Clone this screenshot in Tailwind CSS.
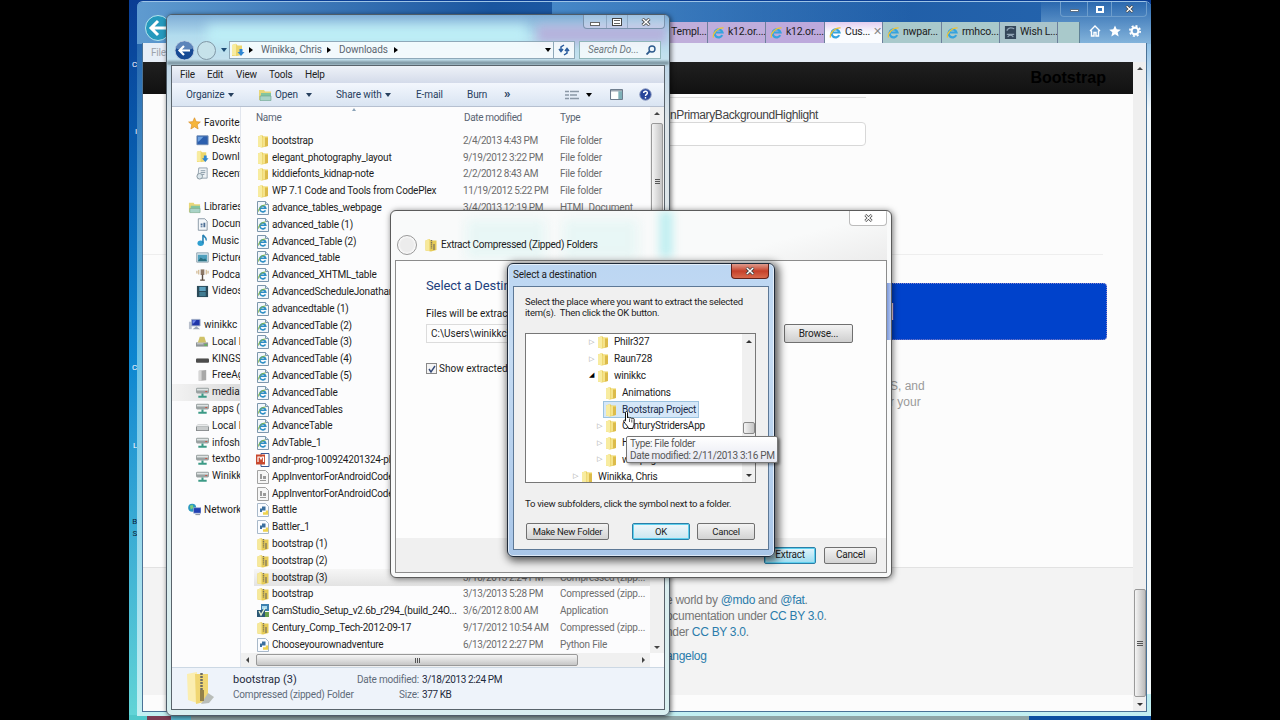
<!DOCTYPE html>
<html lang="en">
<head>
  <meta charset="UTF-8">
  <title>Desktop</title>
  <script src="https://cdn.jsdelivr.net/npm/@tailwindcss/browser@4"></script>
</head>
<body class="bg-black w-[1280px] h-[720px] overflow-hidden font-[Roboto,sans-serif] text-[10px] leading-none tracking-[-0.2px] text-[#1c1c1c] whitespace-nowrap">

  <!-- icon set -->
  <svg class="hidden">
    <symbol id="folder" viewBox="0 0 14 14">
      <path d="M2 2.500 6 1l1.500 1.500H12V12L6 13.500 2 12.500z" fill="#e9cf5c"/>
      <path d="M2 2.500 6 1v12.500l-4-1z" fill="#f8eca0"/>
      <path d="M6.500 3.500 9 2.500v9.500l-2.500 1z" fill="#f5e38a"/>
      <path d="M9 4h3v8l-3 .6z" fill="#dcbb4a"/>
    </symbol>
    <symbol id="zip" viewBox="0 0 14 14">
      <path d="M1.500 2.500 5.500 1 7 2.500h5.500V12L7 13.500l-5.500-1z" fill="#e6cb57"/>
      <path d="M1.500 2.500 5.500 1v12l-4-.5z" fill="#f7e99a"/>
      <path d="M7.500 2v9" stroke="#77725a" stroke-width="1.400" stroke-dasharray="1.300 .8"/>
      <path d="M9 6h2v6H9z" fill="#a3945a"/>
    </symbol>
    <symbol id="html" viewBox="0 0 14 14">
      <path d="M1.500.5h8l3 3v10h-11z" fill="#f2f7fb" stroke="#7d97ad"/>
      <path d="M9.500.5v3h3" fill="#cfdfec" stroke="#7d97ad"/>
      <path d="M9.500 9.300A3 3 0 1 1 9.800 7.300H4.200" fill="none" stroke="#2e8ec4" stroke-width="1.600"/>
      <path d="M2.500 10.500C2.500 7 6 4 9.500 4" fill="none" stroke="#86b640" stroke-width="1"/>
    </symbol>
    <symbol id="ie" viewBox="0 0 14 14">
      <path d="M11 9.800A4.300 4.300 0 1 1 11.300 7H4" fill="none" stroke="#35a3de" stroke-width="2.400"/>
      <path d="M1.500 12.500C.5 8 6 1.500 12.500 2" fill="none" stroke="#e9c33d" stroke-width="1.300"/>
    </symbol>
    <symbol id="ppt" viewBox="0 0 14 14">
      <path d="M5 .5h8v13H5z" fill="#fff" stroke="#3b5a96"/>
      <path d="M0 1.500h9v10H0z" fill="#c8482e"/>
      <path d="M2 9V4h2l1 2 1-2h1.500v5" fill="none" stroke="#fff" stroke-width="1.200"/>
    </symbol>
    <symbol id="doc" viewBox="0 0 14 14">
      <path d="M1.500.5h8l3 3v10h-11z" fill="#f6f6f6" stroke="#a2a2a2"/>
      <path d="M4 4h2v5H4zM7 6h3v3H7zM4 10h6v1H4z" fill="#9a9a9a"/>
    </symbol>
    <symbol id="py" viewBox="0 0 14 14">
      <path d="M1.500.5h8l3 3v10h-11z" fill="#fafcff" stroke="#a9b9ca"/>
      <path d="M5 9V6.500h3.500V4.500H6" fill="none" stroke="#3b6f9e" stroke-width="2"/>
      <path d="M7 10.500h4V7.500" fill="none" stroke="#eed24d" stroke-width="2.400"/>
    </symbol>
    <symbol id="setup" viewBox="0 0 14 14">
      <path d="M5 0h8v7H5z" fill="#3c7fae"/>
      <path d="M1 6h8v7H1z" fill="#2b5875"/>
      <path d="M6 2h5v3H6z" fill="#a8d9ee"/>
      <path d="M3 7l2 4 4-7" fill="none" stroke="#e5f1d6" stroke-width="1.400"/>
      <path d="M9 8h4v5H9z" fill="#6aa14e"/>
    </symbol>
    <symbol id="star" viewBox="0 0 14 14">
      <path d="M7 .8l1.800 4.200 4.500.4-3.400 3 1 4.500L7 10.500l-3.900 2.400 1-4.500-3.400-3 4.500-.4z" fill="#f6b63c" stroke="#d98c22" stroke-width=".7"/>
    </symbol>
    <symbol id="desktop" viewBox="0 0 14 14">
      <path d="M1 2h12v9.500H1z" fill="#2c5fae" stroke="#6f8bb3"/>
      <path d="M2 3h6L3 8H2z" fill="#6fa2e0"/>
    </symbol>
    <symbol id="downloads" viewBox="0 0 14 14">
      <path d="M1 2 5 .8 6.500 2.500H11V12l-5 1H1z" fill="#ecd66c"/>
      <path d="M1 2 5 .8v12L1 12z" fill="#f8eca0"/>
      <path d="M8.500 6h3v3H13.500L10 13 6.500 9h2z" fill="#2f86d2"/>
    </symbol>
    <symbol id="recent" viewBox="0 0 14 14">
      <path d="M3 1h9v11H2z" fill="#eef2f5" stroke="#93a2ad"/>
      <path d="M5 4h5M5 6h5M5 8h4" stroke="#8698a6"/>
      <circle cx="4" cy="10" r="3" fill="#dbe6ec" stroke="#86959f"/>
    </symbol>
    <symbol id="library" viewBox="0 0 14 14">
      <path d="M1 2h5l1 1.500h6V12H1z" fill="#e8d678"/>
      <path d="M3 5h10v3H3z" fill="#83c5a0"/>
      <path d="M2 8h11v4.500H2z" fill="#a9d3c7" stroke="#6ba28d" stroke-width=".6"/>
    </symbol>
    <symbol id="page" viewBox="0 0 14 14">
      <path d="M2.500.8h7l2.500 2.700v9.700H2.500z" fill="#f4f7fa" stroke="#8796a4"/>
      <path d="M5 6h2v2H5zM8 5h2v5H8zM5 9h2v1H5z" fill="#4a6c93"/>
    </symbol>
    <symbol id="music" viewBox="0 0 14 14">
      <ellipse cx="5" cy="10" rx="3.400" ry="3" fill="#2f9fd0"/>
      <path d="M7.500 10V1c1 2 4.500 2.500 3.500 6" fill="none" stroke="#2681b4" stroke-width="1.700"/>
    </symbol>
    <symbol id="picture" viewBox="0 0 14 14">
      <path d="M.8 2h12.400v10H.8z" fill="#dfeaf0" stroke="#8ba0ad"/>
      <path d="M2 4h10v7H2z" fill="#4fa0bd"/>
      <path d="M2 11l3-4 3 2 2-1 2 3z" fill="#2b6f80"/>
    </symbol>
    <symbol id="podcast" viewBox="0 0 14 14">
      <path d="M5 1.500h4v6H5z" fill="#8c7765"/>
      <path d="M7 7v6M4.500 13h5" stroke="#5c4d42" stroke-width="1.500"/>
      <path d="M3 2v5M11 2v5M1 3v3M13 3v3" stroke="#c2a16e"/>
    </symbol>
    <symbol id="video" viewBox="0 0 14 14">
      <path d="M1 1h12v12H1z" fill="#2b4a59"/>
      <path d="M3.500 2h7v4.500h-7z" fill="#5ea2c0"/>
      <path d="M3.500 7.500h7V12h-7z" fill="#417c92"/>
    </symbol>
    <symbol id="book" viewBox="0 0 14 14">
      <path d="M1 0h12v14H1z" fill="#33475a"/>
      <path d="M3 5c2-4 6-3 8-2M3 9h8M4 12c1-3 5-3 6 0" fill="none" stroke="#8ea3b4" stroke-width="1.300"/>
    </symbol>
    <symbol id="pc" viewBox="0 0 14 14">
      <path d="M1 4h3v8H1z" fill="#b9c0cc"/>
      <path d="M4 1.500h9v7H4z" fill="#1f35a8" stroke="#a3b0c6"/>
      <path d="M9 9l-4 3h8z" fill="#9aa5b5"/>
      <path d="M5 2.500h4L6 6H5z" fill="#6d86e8"/>
    </symbol>
    <symbol id="localdisk" viewBox="0 0 14 14">
      <path d="M0 8h13v4.500H0z" fill="#8e9496"/>
      <path d="M2 8 4 2h5l2 6z" fill="#cfc168"/>
      <path d="M1 9h7v1H1z" fill="#d8dcdd"/>
      <path d="M9 10h3v1.500H9z" fill="#5abb49"/>
    </symbol>
    <symbol id="usb" viewBox="0 0 14 14">
      <rect x="0" y="7" width="14" height="4.500" rx="1" fill="#4c4c4c"/>
      <path d="M1 7h12" stroke="#9b9b9b"/>
    </symbol>
    <symbol id="extdrive" viewBox="0 0 14 14">
      <path d="M3 2l8-1v11l-8 1z" fill="#a8a8a8"/>
      <path d="M3 2l3-.4v11L3 13z" fill="#d6d6d6"/>
    </symbol>
    <symbol id="netdrive" viewBox="0 0 14 14">
      <rect x="0" y="2" width="14" height="6" rx="1.500" fill="#9aa2a2"/>
      <path d="M1 3h12v1.800H1z" fill="#dfe4e4"/>
      <path d="M7 8v3M2.500 11.500h9" stroke="#3c9a86" stroke-width="2.200"/>
      <path d="M10 5.500h2v1h-2z" fill="#d04c3a"/>
    </symbol>
    <symbol id="drive" viewBox="0 0 14 14">
      <path d="M0 8l2-2h10l2 2v5H0z" fill="#85898b"/>
      <path d="M1 8.500h12V12H1z" fill="#c9cccd"/>
      <path d="M0 8l2-2h10l2 2z" fill="#e9ebec"/>
    </symbol>
    <symbol id="network" viewBox="0 0 14 14">
      <circle cx="4.500" cy="5" r="4.300" fill="#2b9ac0"/>
      <path d="M2 3l3-1 1 3-3 2z" fill="#7fce7a"/>
      <path d="M6 5h8v6H6z" fill="#2140b4" stroke="#aebad0" stroke-width=".7"/>
      <path d="M8 12.500h5" stroke="#7c8797"/>
    </symbol>
    <symbol id="x" viewBox="0 0 10 8">
      <path d="M1.500.8l7 6.400M8.500.8l-7 6.400" stroke="#444" stroke-width="3"/>
      <path d="M1.800 1l6.400 6M8.200 1 1.800 7" stroke="#fff" stroke-width="1.500"/>
    </symbol>
  </svg>

  <!-- desktop -->
  <div class="absolute left-[129px] top-0 w-[1022px] h-[720px] overflow-hidden bg-linear-to-b from-[#0a3d94] via-[#0d86d0] to-[#62d5d6]">
    <div class="absolute left-0 top-0 w-2 h-[720px] flex flex-col items-end text-[8px] text-[#0b2338]">
      <span class="mt-[61px] text-white">C</span>
      <span class="mt-[59px] text-white">I</span>
      <span class="mt-[228px] text-white">C</span>
      <span class="mt-[70px] text-white">L</span>
      <span class="mt-[68px]">B</span>
      <span class="mt-1">S</span>
    </div>
    <div class="absolute left-0 bottom-0 w-full h-[5px] flex bg-[#86a7a8]">
      <div class="w-[18px] bg-[#50c8ca]"></div>
      <div class="w-[24px] bg-[#7b3b52]"></div>
      <div class="w-[20px] bg-[#57b7d0]"></div>
      <div class="w-[838px] bg-[#8fa5a6]"></div>
      <div class="flex-1 bg-[#0b4fa0]"></div>
    </div>
  </div>

  <!-- browser window -->
  <div class="absolute left-[137px] top-px w-[1014px] h-[715px] flex flex-col pl-[5px] pr-1 pb-1 rounded-t-md border-t border-[#9cc3e6] bg-linear-to-b from-[#1d5ca8] via-[#6fc3e6] via-50% to-[#c3f0f2] overflow-hidden">
    <div class="absolute right-0 top-[42px] w-[4px] h-[650px] bg-linear-to-b from-[#8fc0e6] via-[#f2f8fb] via-10% to-[#f6fafb]"></div>
    <div class="absolute left-0 top-0 w-full h-[42px] bg-linear-to-r from-[#5f9bd0] via-[#1a559f] via-35% to-[#2565ae]"></div>
    <div class="absolute right-0 top-0 w-[110px] h-[42px] bg-linear-to-b from-[#2f6cb0]/60 to-[#85b5dc]"></div>
    <div class="absolute left-[415px] top-0 w-[360px] h-5 bg-linear-to-r from-[#4688c8] to-transparent"></div>

    <div class="relative h-[20px] shrink-0 flex justify-end">
      <div class="flex h-[15px] w-[87px] border-x border-b border-[#6d9dcc] rounded-b">
        <span class="w-[26px] flex items-end justify-center pb-1"><span class="w-[9px] h-[3px] bg-white border border-[#5b6f85]"></span></span>
        <span class="w-[25px] border-x border-[#6d9dcc] flex items-center justify-center"><span class="w-[8px] h-[7px] border-2 border-white"></span></span>
        <span class="flex-1 flex items-center justify-center"><svg class="w-[9px] h-[8px]"><use href="#x"/></svg></span>
      </div>
    </div>
    <div class="relative h-[21px] shrink-0 flex">
      <div class="w-[524px] flex items-center">
        <svg class="w-[28px] h-[28px] -mt-3 ml-px" viewBox="0 0 28 28">
          <circle cx="15" cy="15" r="12.500" fill="#2599bd" stroke="#b6e4ee"/>
          <path d="M23 15H9M15 8l-7 7 7 7" fill="none" stroke="#fff" stroke-width="3"/>
        </svg>
      </div>
      <div id="tabs" class="flex text-[10.500px] tracking-[-0.2px]"></div>
      <div class="w-[22px] bg-[#a9c9cb] border-r border-[#5f8196]"></div>
      <div class="flex-1 flex items-center justify-between pl-[9px] pr-[6px] pb-[3px]">
        <svg class="w-3 h-3" viewBox="0 0 12 12"><path d="M1 6l5-5 5 5M2.500 5.500V11H5V7.500h2V11h2.500V5.500" fill="none" stroke="#fff" stroke-width="1.400"/></svg>
        <svg class="w-3 h-3" viewBox="0 0 14 14"><path d="M7 .5l2 4.500 4.800.4-3.700 3.100L11.300 13.500 7 10.800l-4.300 2.700 1.200-5L.2 5.400 5 5z" fill="#fff"/></svg>
        <svg class="w-3 h-3" viewBox="0 0 14 14"><circle cx="7" cy="7" r="4" fill="none" stroke="#fff" stroke-width="2.500"/><circle cx="7" cy="7" r="6" fill="none" stroke="#fff" stroke-width="2" stroke-dasharray="2.350 2.350"/></svg>
      </div>
    </div>

    <div class="relative flex-1 min-h-0 flex flex-col border-x border-b border-[#4a7296] bg-[#fcfcfc]">
      <div class="h-[19px] shrink-0 bg-[#e7eef7] pl-2 pt-[5px] text-[#9da3ab]">File</div>
      <div class="flex-1 min-h-0 flex">
        <div class="flex-1 flex flex-col font-['Liberation_Sans',sans-serif] text-[12px]">
          <div class="h-[32px] shrink-0 bg-linear-to-b from-[#202020] to-[#111] flex justify-end items-center pr-[27px] text-[16px] tracking-normal font-bold text-black">Bootstrap</div>
          <div class="h-[4px] ml-[520px] w-[203px] border-b border-[#dcdcdc]"></div>
          <div class="pl-[527px] pt-[11px] tracking-[-0.4px] text-[#444]">nPrimaryBackgroundHighlight</div>
          <div class="mt-px ml-[500px] w-[223px] h-[24px] rounded border border-[#d8d8d8] bg-white"></div>
          <div class="mt-[108px] mr-[30px] border-t border-[#eee]"></div>
          <div class="mt-[28px] ml-[500px] mr-[26px] h-[57px] rounded bg-[#0042cb] border border-dotted border-[#8a83c8] flex items-center pl-[237px] text-[24px] text-white">d</div>
          <div class="mt-[38px] pl-[740px] tracking-normal leading-4 text-[#9a9a9a]">
            <p class="pl-[7px]">S, and</p>
            <p class="pl-[7px]">r your</p>
          </div>
          <div class="mt-[157px] h-[128px] border-t border-[#e2e2e2] bg-[#f3f3f3] pt-[24px] pl-[523px] tracking-[-0.3px] leading-4 text-[#777]">
            <p>e world by <span class="text-[#2a7cab]">@mdo</span> and <span class="text-[#2a7cab]">@fat</span>.</p>
            <p>ocumentation under <span class="text-[#2a7cab]">CC BY 3.0</span>.</p>
            <p>nder <span class="text-[#2a7cab]">CC BY 3.0</span>.</p>
            <p class="mt-2 text-[#2a7cab]">angelog</p>
          </div>
        </div>
        <div class="w-[13px] flex flex-col items-center bg-[#efefef]">
          <span class="h-[14px] pt-[5px]"><span class="block border-x-3 border-x-transparent border-b-3 border-b-[#444]"></span></span>
          <span class="mt-[513px] w-[12px] h-[108px] rounded-xs border border-[#999] bg-linear-to-r from-[#f4f4f4] to-[#bcbcbc] flex flex-col items-center justify-center gap-px">
            <span class="w-[6px] h-px bg-[#555]"></span><span class="w-[6px] h-px bg-[#555]"></span><span class="w-[6px] h-px bg-[#555]"></span>
          </span>
          <span class="pt-[6px]"><span class="block border-x-3 border-x-transparent border-t-3 border-t-[#333]"></span></span>
        </div>
      </div>
    </div>
  </div>

  <!-- file explorer window -->
  <div class="absolute left-[166px] top-[14px] w-[504px] h-[702px] rounded-md border border-[#4e5c68] bg-linear-to-b from-[#9fc8e6] via-[#dde4e8] via-15% to-[#d9eff0] shadow-[1px_1px_5px_rgba(0,0,0,.6)] flex flex-col px-1 pb-[5px] overflow-hidden">
    <div class="absolute left-0 top-0 w-full h-[51px] bg-linear-to-b from-[#7fadd6] via-[#b2dcee] via-40% to-[#c9e2ee]"></div>
    <div class="absolute left-[40px] top-[10px] w-[320px] h-[20px] bg-[#bdeef6] blur-[6px]"></div>
    <div class="absolute left-[370px] top-[10px] w-[130px] h-[18px] bg-[#b5b2dc] blur-[5px]"></div>
    <div class="absolute left-0 top-[46px] w-full h-[4px] bg-[#7f99a5] blur-[1px]"></div>

    <div class="relative h-[25px] shrink-0 flex justify-end items-start">
      <div class="flex w-[82px] h-[14px] border-x border-b border-[#7a92ad] rounded-b bg-white/25">
        <span class="w-[22px] flex items-end justify-center pb-[2px]"><span class="w-[10px] h-[4px] bg-white border border-[#666]"></span></span>
        <span class="w-[22px] border-x border-[#7a92ad]/60 flex items-center justify-center"><span class="w-[10px] h-[8px] bg-white border border-[#444] p-px"><span class="block w-full h-[4px] border-y border-[#666]"></span></span></span>
        <span class="flex-1 flex items-center justify-center"><svg class="w-[10px] h-[8px]"><use href="#x"/></svg></span>
      </div>
    </div>
    <div class="relative h-[25px] shrink-0 flex items-center pl-[3px] pb-[5px]">
      <svg class="w-[44px] h-[21px] shrink-0" viewBox="0 0 44 21">
        <circle cx="10.500" cy="10.500" r="9.500" fill="#174a94" stroke="#b9cbe0"/>
        <path d="M1.500 8a9.500 9.500 0 0 1 18 0c-5 3-13 3-18 0z" fill="#7a9dcb" opacity=".7"/>
        <path d="M16 10.500H6M10 6l-4.500 4.500L10 15" fill="none" stroke="#fff" stroke-width="2.200"/>
        <circle cx="32.500" cy="10.500" r="9" fill="#c6e2ea" stroke="#8097a5"/>
      </svg>
      <span class="w-[12px] flex justify-center"><span class="border-x-3 border-x-transparent border-t-4 border-t-[#1d4c74]"></span></span>
      <div class="ml-[-1px] w-[325px] h-[18px] border border-[#8fa9b9] bg-white/80 flex items-center text-[#5c6670] tracking-[-0.1px]">
        <svg class="w-[14px] h-[14px] ml-px"><use href="#downloads"/></svg>
        <span class="ml-[4px] border-y-3 border-y-transparent border-l-4 border-l-black"></span>
        <span class="ml-[8px] w-[60px]">Winikka, Chris</span>
        <span class="ml-[6px] border-y-3 border-y-transparent border-l-4 border-l-black"></span>
        <span class="ml-[8px] w-[48px]">Downloads</span>
        <span class="ml-[7px] border-y-3 border-y-transparent border-l-4 border-l-black"></span>
        <span class="ml-auto mr-[2px] border-x-3 border-x-transparent border-t-4 border-t-black"></span>
      </div>
      <div class="w-[21px] h-[18px] border border-l-0 border-[#8fa9b9] bg-white/80 flex items-center justify-center">
        <svg class="w-[12px] h-[12px]" viewBox="0 0 12 12"><path d="M6 1 3 3v4M1 5l2 2.500L5 5M6 11l3-2V5M7 7l2-2.500L11 7" fill="none" stroke="#2b5c9e" stroke-width="1.500"/></svg>
      </div>
      <div class="ml-[4px] w-[82px] h-[18px] border border-[#8fb5b9] bg-white/75 flex items-center justify-between pl-[8px] pr-[4px] italic text-[#6d7880] tracking-[-0.1px]">Search Do...
        <svg class="w-[10px] h-[10px]" viewBox="0 0 10 10"><circle cx="6" cy="4" r="3" fill="none" stroke="#2e5b8d" stroke-width="1.400"/><path d="M4 6 .5 9.500" stroke="#2e5b8d" stroke-width="1.800"/></svg>
      </div>
    </div>

    <div class="relative flex-1 min-h-0 flex flex-col border border-[#59636b] bg-[#fcfcfd]">
      <div class="h-[17px] shrink-0 bg-linear-to-b from-[#eef2f8] to-[#d4dbea] flex items-center pl-[8px] text-[#222]">
        <span class="w-[27px]">File</span><span class="w-[29px]">Edit</span><span class="w-[33px]">View</span><span class="w-[36px]">Tools</span><span>Help</span>
      </div>
      <div class="h-[24px] shrink-0 border-b border-[#b6c0d0] bg-linear-to-b from-[#f3f7fd] to-[#d9e4f2] flex items-center pl-[14px] text-[#27405e] tracking-[-0.1px]">
        <span class="w-[42px]">Organize</span>
        <span class="border-x-3 border-x-transparent border-t-4 border-t-[#27405e]"></span>
        <svg class="ml-[24px] w-[14px] h-[14px]"><use href="#library"/></svg>
        <span class="ml-[3px] w-[31px]">Open</span>
        <span class="border-x-3 border-x-transparent border-t-4 border-t-[#27405e]"></span>
        <span class="ml-[24px] w-[49px]">Share with</span>
        <span class="border-x-3 border-x-transparent border-t-4 border-t-[#27405e]"></span>
        <span class="ml-[25px] w-[51px]">E-mail</span>
        <span class="w-[37px]">Burn</span>
        <span class="w-[61px] text-[13px] font-bold leading-none -mt-[2px]">»</span>
        <svg class="w-[14px] h-[10px]" viewBox="0 0 14 10"><path d="M0 1.500h4M5 1.500h9M0 5h4M5 5h7M0 8.500h4M5 8.500h9" stroke="#8b98a6" stroke-width="1.300"/></svg>
        <span class="ml-[7px] border-x-3 border-x-transparent border-t-4 border-t-black"></span>
        <svg class="ml-[18px] w-[13px] h-[11px]" viewBox="0 0 14 12"><path d="M.5.5h13v11H.5z" fill="#fff" stroke="#5c6c7e"/><path d="M.5 2h13" stroke="#5c6c7e"/><path d="M9 2.500h4v8.500H9z" fill="#7fb0b8"/></svg>
        <svg class="ml-[16px] w-[13px] h-[13px]" viewBox="0 0 14 14"><circle cx="7" cy="7" r="6.200" fill="#27459a" stroke="#8d9bbf"/><path d="M5 5.500C5 2.500 9.300 3 9 5.500 8.800 7 7 6.800 7 8.500M7 9.800v1.400" fill="none" stroke="#fff" stroke-width="1.500"/></svg>
      </div>

      <div class="flex-1 min-h-0 flex">
        <div id="nav" class="w-[69px] shrink-0 pt-[8px] border-r border-[#e2e6ee] overflow-hidden"></div>
        <div class="flex-1 min-w-0 flex flex-col">
          <div class="flex-1 min-h-0 flex">
            <div class="flex-1 min-w-0">
              <div class="relative h-[25.500px] flex items-center pb-[4px] pl-[15px] text-[#5a6472]">
                <span class="w-[208px] tracking-[-0.3px]">Name</span><span class="w-[96px] tracking-[-0.35px]">Date modified</span><span>Type</span>
                <span class="absolute left-[111px] top-px border-x-2 border-x-transparent border-b-3 border-b-[#8ba3b8]"></span>
              </div>
              <div id="files" class="pl-[13px]"></div>
            </div>
            <div class="w-[14px] shrink-0 bg-[#f0f0f0] flex flex-col items-center justify-between pt-[5px] pb-[4px]">
              <span class="border-x-3 border-x-transparent border-b-3 border-b-[#444]"></span>
              <span class="w-[12px] h-[118px] mb-[398px] rounded-xs border border-[#999] bg-linear-to-r from-[#f4f4f4] to-[#c4c4c4] flex flex-col items-center justify-center gap-px">
                <span class="w-[5px] h-px bg-[#555]"></span><span class="w-[5px] h-px bg-[#555]"></span><span class="w-[5px] h-px bg-[#555]"></span>
              </span>
              <span class="border-x-3 border-x-transparent border-t-3 border-t-[#444]"></span>
            </div>
          </div>
          <div class="h-[14px] shrink-0 mr-[14px] bg-[#f0f0f0] flex items-center pl-[5px] pr-[5px]">
            <span class="border-y-3 border-y-transparent border-r-3 border-r-[#444]"></span>
            <span class="ml-[7px] w-[322px] h-[12px] rounded-xs border border-[#999] bg-linear-to-b from-[#f6f6f6] to-[#c6c6c6] flex items-center justify-center gap-px">
              <span class="w-px h-[5px] bg-[#555]"></span><span class="w-px h-[5px] bg-[#555]"></span><span class="w-px h-[5px] bg-[#555]"></span>
            </span>
            <span class="ml-auto border-y-3 border-y-transparent border-l-3 border-l-[#444]"></span>
          </div>
        </div>
      </div>

      <div class="h-[42px] shrink-0 border-t border-[#ccd8e4] bg-[#eef3fa] flex pl-[13px] text-[#5f6b79]">
        <svg class="w-[32px] h-[34px] mt-[3px]" viewBox="0 0 32 34">
          <path d="M2 3 12 1v31L3 29z" fill="#fbeeb0"/>
          <path d="M10 3h13v27l-12 3z" fill="#f0d672"/>
          <path d="M23 22l6 4-5 6-8 1z" fill="#b9bdb9"/>
          <path d="M16.500 2v18" stroke="#6b6b66" stroke-width="2.500" stroke-dasharray="2 1"/>
          <path d="M15 19h4v11h-4z" fill="#94814a"/>
        </svg>
        <div class="ml-[16px] w-[123px] pt-[5px] leading-[14px]">
          <p class="text-[#1e2a3c] tracking-normal text-[11px]">bootstrap (3)</p>
          <p class="pt-px">Compressed (zipped) Folder</p>
        </div>
        <div class="w-[63px] pt-[5px] leading-[14px] flex flex-col items-end">
          <p>Date modified:</p>
          <p class="pt-px">Size:</p>
        </div>
        <div class="ml-[3px] pt-[5px] leading-[14px] text-[#1e2a3c] tracking-[-0.4px]">
          <p>3/18/2013 2:24 PM</p>
          <p class="pt-px">377 KB</p>
        </div>
      </div>
    </div>
  </div>

  <!-- extract wizard -->
  <div class="absolute left-[390px] top-[210px] w-[502px] h-[368px] rounded-md border border-[#5b5b5b] bg-[#f9fafa] shadow-[1px_1px_6px_rgba(0,0,0,.55)] flex flex-col px-1 pb-1 overflow-hidden">
    <div class="absolute left-[75px] top-[8px] w-[80px] h-[40px] bg-[#d8f3f1]/50 blur-[6px]"></div>
    <div class="absolute left-[172px] top-[8px] w-[75px] h-[40px] bg-[#d8f3f1]/50 blur-[6px]"></div>
    <div class="absolute left-[268px] top-0 w-[14px] h-[46px] bg-[#c2eff1] blur-[4px]"></div>
    <div class="absolute right-[4px] top-0 w-[180px] h-[49px] bg-linear-to-br from-transparent from-50% to-[#ececec]"></div>
    <div class="absolute right-0 top-[72px] w-[5px] h-[57px] bg-linear-to-r from-[#6f8fd8] to-[#b4c6ee]"></div>
    <div class="relative h-[20px] flex justify-end">
      <span class="w-[38px] h-[15px] border-x border-b border-[#bcbcbc] rounded-b flex items-center justify-center bg-white"><svg class="w-[9px] h-[8px]"><use href="#x"/></svg></span>
    </div>
    <div class="relative h-[29px] flex items-center pl-[2px] pb-[1px]">
      <span class="w-[20px] h-[20px] rounded-full border border-[#9a9a9a] bg-[#ececec] shadow-[inset_0_0_2px_1px_#fff]"></span>
      <svg class="ml-[7px] w-[14px] h-[14px]"><use href="#zip"/></svg>
      <span class="ml-[3px] tracking-[-0.25px]">Extract Compressed (Zipped) Folders</span>
    </div>
    <div class="relative flex-1 border border-[#8c8c8c] bg-[#fdfdfd] flex flex-col">
      <div class="flex-1 pl-[30px] pt-[18px]">
        <h1 class="text-[13px] leading-[14px] tracking-[-0.1px] text-[#1d3f7c]">Select a Destination</h1>
        <p class="mt-[16px] tracking-[0px]">Files will be extracted to this folder:</p>
        <div class="mt-[5px] flex">
          <div class="w-[346px] h-[19px] border border-[#dcdcdc] flex items-center pl-[4px] tracking-normal">C:\Users\winikkc\</div>
          <button class="ml-[12px] w-[69px] h-[19px] border border-[#707070] rounded-xs bg-linear-to-b from-[#f3f3f3] to-[#cfcfcf]">Browse...</button>
        </div>
        <div class="mt-[20px] flex items-center tracking-normal">
          <span class="w-[11px] h-[11px] border border-[#888] bg-[#f4f4f4] flex items-center justify-center"><svg class="w-[8px] h-[8px]" viewBox="0 0 8 8"><path d="M1 4l2 3 4-6" fill="none" stroke="#354a78" stroke-width="1.400"/></svg></span>
          <span class="ml-[2px]">Show extracted files when complete</span>
        </div>
      </div>
      <div class="h-[34px] bg-[#f0f0f0] flex justify-end items-center gap-[8px] pr-[9px]">
        <button class="w-[52px] h-[17px] border border-[#2b7fa8] rounded-xs bg-linear-to-b from-[#e3f5fc] to-[#9bdcf1] shadow-[inset_0_0_0_1px_#5fd0ee]">Extract</button>
        <button class="w-[53px] h-[17px] border border-[#707070] rounded-xs bg-linear-to-b from-[#f3f3f3] to-[#d3d3d3]">Cancel</button>
      </div>
    </div>
  </div>

  <!-- folder picker -->
  <div class="absolute left-[507px] top-[263px] w-[268px] h-[294px] rounded-md border border-[#202b3a] bg-linear-to-b from-[#bcd6f2] via-[#c6dcf3] via-30% to-[#a9c6e8] shadow-[2px_2px_9px_2px_rgba(0,0,0,.65),inset_0_0_0_1px_rgba(255,255,255,.6)] flex flex-col px-[5px] pb-[6px]">
    <div class="h-[22px] flex justify-between">
      <span class="pt-[6px]">Select a destination</span>
      <span class="w-[38px] h-[15px] border border-t-0 border-[#61221a] rounded-b bg-linear-to-b from-[#dd9a8c] via-[#c5402a] via-50% to-[#d8694c] flex items-center justify-center"><svg class="w-[10px] h-[8px]"><use href="#x"/></svg></span>
    </div>
    <div class="flex-1 border border-[#5d7896] bg-[#f0f0f0] px-[12px] pt-[10px]">
      <p class="-ml-px text-[9.500px] leading-[10.500px] tracking-[-0.250px] whitespace-pre">Select the place where you want to extract the selected
item(s).  Then click the OK button.</p>
      <div class="mt-[15px] -ml-px h-[150px] border border-[#777] bg-white flex overflow-hidden">
        <div id="tree" class="flex-1"></div>
        <div class="w-[13px] bg-[#f0f0f0] flex flex-col items-center justify-between pt-[6px] pb-[5px]">
          <span class="border-x-3 border-x-transparent border-b-3 border-b-[#333]"></span>
          <span class="mt-[78px] mb-[40px] w-[12px] h-[12px] rounded-xs border border-[#888] bg-linear-to-r from-[#f4f4f4] to-[#c4c4c4]"></span>
          <span class="border-x-3 border-x-transparent border-t-3 border-t-[#333]"></span>
        </div>
      </div>
      <p class="mt-[16px] -ml-px text-[9.500px] leading-[10px] tracking-[-0.250px]">To view subfolders, click the symbol next to a folder.</p>
      <div class="mt-[14px] flex text-[9.500px] tracking-[-0.250px]">
        <button class="w-[83px] h-[17px] border border-[#707070] rounded-xs bg-linear-to-b from-[#f3f3f3] to-[#d3d3d3]">Make New Folder</button>
        <button class="ml-[23px] w-[58px] h-[17px] border border-[#2b7fa8] rounded-xs bg-linear-to-b from-[#f0f7fa] to-[#c9e6f1] shadow-[inset_0_0_0_1px_#5fd0ee]">OK</button>
        <button class="ml-[7px] w-[58px] h-[17px] border border-[#707070] rounded-xs bg-linear-to-b from-[#f3f3f3] to-[#d3d3d3]">Cancel</button>
      </div>
    </div>
  </div>

  <!-- tooltip and pointer -->
  <div class="absolute left-[626px] top-[436px] w-[152px] h-[27px] border border-[#767676] rounded-xs bg-linear-to-b from-white to-[#e5e7f1] shadow-[2px_2px_3px_rgba(0,0,0,.4)] pl-[3px] pt-px leading-[12px] text-[#575757] tracking-[-0.3px]">
    <p>Type: File folder</p>
    <p>Date modified: 2/11/2013 3:16 PM</p>
  </div>
  <svg class="absolute left-[623px] top-[411px] w-[14px] h-[19px]" viewBox="0 0 14 19">
    <path d="M2.500 1.500c0-1.300 2-1.300 2 0V7c.3-1 2-.9 2.200.2.400-.8 2-.6 2.200.5.500-.8 2.300-.5 2.300.8l-.2 5c-.2 1.500-1 2-1 4H5.500C5 15 2.500 13.500.8 10.500c-.6-1.300.8-1.800 1.700-.6z" fill="#fff" stroke="#111"/>
    <path d="M6.500 8v3M8.800 8.500v3" stroke="#111" stroke-width=".7"/>
  </svg>

  <script>
    const tabs = [
      ["", "Templ...", "w-[42px] pl-[5px] bg-[#c0aedb]"],
      ["ie", "k12.or....", "w-[58px] bg-[#bfaddc]"],
      ["ie", "k12.or....", "w-[59px] bg-[#bda9dc]"],
      ["ie", "Cus...", "w-[58px] bg-linear-to-b from-[#e3cdf0] to-[#fafcff] to-50%"],
      ["ie", "nwpar...", "w-[59px] bg-[#a9c9cb]"],
      ["ie", "rmhco...", "w-[58px] bg-[#a9c9cb]"],
      ["book", "Wish L...", "w-[58px] bg-[#a9c4cb]"]
    ];
    document.getElementById("tabs").innerHTML = tabs.map(([icon, text, cls]) => `
      <div class="${cls} flex items-center border-r border-[#6d7f9c] overflow-hidden">
        ${icon ? `<svg class="w-[13px] h-[13px] shrink-0 ml-[4px] mr-[3px]"><use href="#${icon}"/></svg>` : ""}
        <span>${text}</span>
        ${text === "Cus..." ? `<span class="ml-[3px] text-[#888]">✕</span>` : ""}
      </div>`).join("");

    const nav = [
      ["star", "Favorites"], ["desktop", "Desktop", 1], ["downloads", "Downloads", 1], ["recent", "Recent Places", 1], null,
      ["library", "Libraries"], ["page", "Documents", 1], ["music", "Music", 1], ["picture", "Pictures", 1],
      ["podcast", "Podcasts", 1], ["video", "Videos", 1], null,
      ["pc", "winikkc"], ["localdisk", "Local Disk", 1], ["usb", "KINGSTON", 1], ["extdrive", "FreeAgent", 1],
      ["netdrive", "media (", 1], ["netdrive", "apps (\\\\", 1], ["drive", "Local Disk", 1], ["netdrive", "infoshare", 1],
      ["netdrive", "textbooks", 1], ["netdrive", "Winikka", 1], null,
      ["network", "Network"]
    ];
    document.getElementById("nav").innerHTML = nav.map(item => {
      if (!item) return `<div class="h-[16.8px]"></div>`;
      const [icon, text, child] = item;
      return `
      <div class="h-[16.8px] flex items-center overflow-hidden tracking-[0px] ${child ? "pl-[24px]" : "pl-[16px]"} ${text === "media (" ? "bg-linear-to-r from-[#f3f3f3] to-[#dcdcdc]" : ""}">
        <svg class="w-[13px] h-[13px] shrink-0 mr-[3px]"><use href="#${icon}"/></svg>
        <span>${text}</span>
      </div>`;
    }).join("");

    const html = "HTML Document", zipped = "Compressed (zipp...";
    const files = [
      ["folder", "bootstrap", "2/4/2013 4:43 PM", "File folder"],
      ["folder", "elegant_photography_layout", "9/19/2012 3:22 PM", "File folder"],
      ["folder", "kiddiefonts_kidnap-note", "2/2/2012 8:43 AM", "File folder"],
      ["folder", "WP 7.1 Code and Tools from CodePlex", "11/19/2012 5:22 PM", "File folder"],
      ["html", "advance_tables_webpage", "3/4/2013 12:19 PM", html],
      ["html", "advanced_table (1)", "", ""],
      ["html", "Advanced_Table (2)", "", ""],
      ["html", "Advanced_table", "", ""],
      ["html", "Advanced_XHTML_table", "", ""],
      ["html", "AdvancedScheduleJonathan", "", ""],
      ["html", "advancedtable (1)", "", ""],
      ["html", "AdvancedTable (2)", "", ""],
      ["html", "AdvancedTable (3)", "", ""],
      ["html", "AdvancedTable (4)", "", ""],
      ["html", "AdvancedTable (5)", "", ""],
      ["html", "AdvancedTable", "", ""],
      ["html", "AdvancedTables", "", ""],
      ["html", "AdvanceTable", "", ""],
      ["html", "AdvTable_1", "", ""],
      ["ppt", "andr-prog-100924201324-phpapp", "", ""],
      ["doc", "AppInventorForAndroidCode", "", ""],
      ["doc", "AppInventorForAndroidCode", "", ""],
      ["py", "Battle", "", ""],
      ["py", "Battler_1", "", ""],
      ["zip", "bootstrap (1)", "", ""],
      ["zip", "bootstrap (2)", "", ""],
      ["zip", "bootstrap (3)", "3/18/2013 2:24 PM", zipped],
      ["zip", "bootstrap", "3/13/2013 5:28 PM", zipped],
      ["setup", "CamStudio_Setup_v2.6b_r294_(build_24O...", "3/6/2012 8:00 AM", "Application"],
      ["zip", "Century_Comp_Tech-2012-09-17", "9/17/2012 10:54 AM", zipped],
      ["py", "Chooseyourownadventure", "6/13/2012 2:27 PM", "Python File"]
    ];
    document.getElementById("files").innerHTML = files.map(([icon, name, date, type]) => `
      <div class="h-[16.8px] flex items-center ${name === "bootstrap (3)" ? "bg-linear-to-b from-[#f6f6f6] to-[#e3e3e3]" : ""}">
        <svg class="w-[14px] h-[14px] shrink-0 ml-[2px] mr-[2px]"><use href="#${icon}"/></svg>
        <span class="w-[191px] shrink-0">${name}</span>
        <span class="w-[97px] shrink-0 tracking-[-0.4px] text-[#6d6d6d]">${date}</span>
        <span class="text-[#6d6d6d]">${type}</span>
      </div>`).join("");

    // name, expander, indent
    const tree = [
      ["Philr327", "▷", "pl-[63px]"],
      ["Raun728", "▷", "pl-[63px]"],
      ["winikkc", "◢", "pl-[63px]"],
      ["Animations", "", "pl-[71px]"],
      ["Bootstrap Project", "", "pl-[71px]"],
      ["CenturyStridersApp", "▷", "pl-[71px]"],
      ["HTML5", "▷", "pl-[71px]"],
      ["webpages", "▷", "pl-[71px]"],
      ["Winikka, Chris", "▷", "pl-[47px]"]
    ];
    document.getElementById("tree").innerHTML = tree.map(([name, arrow, pad]) => `
      <div class="h-[16.8px] flex items-center ${pad}">
        <span class="w-[6px] shrink-0 font-['DejaVu_Sans',sans-serif] text-[7px] ${arrow === "◢" ? "text-black" : "text-[#999]"}">${arrow}</span>
        <span class="h-full flex items-center border pr-[2px] ${name === "Bootstrap Project" ? "border-[#9cc3e0] bg-[#d5e7f8] text-[#1b2c4a]" : "border-transparent"}">
          <svg class="w-[14px] h-[14px] shrink-0 mr-[4px]"><use href="#folder"/></svg>${name}
        </span>
      </div>`).join("");
  </script>
</body>
</html>
